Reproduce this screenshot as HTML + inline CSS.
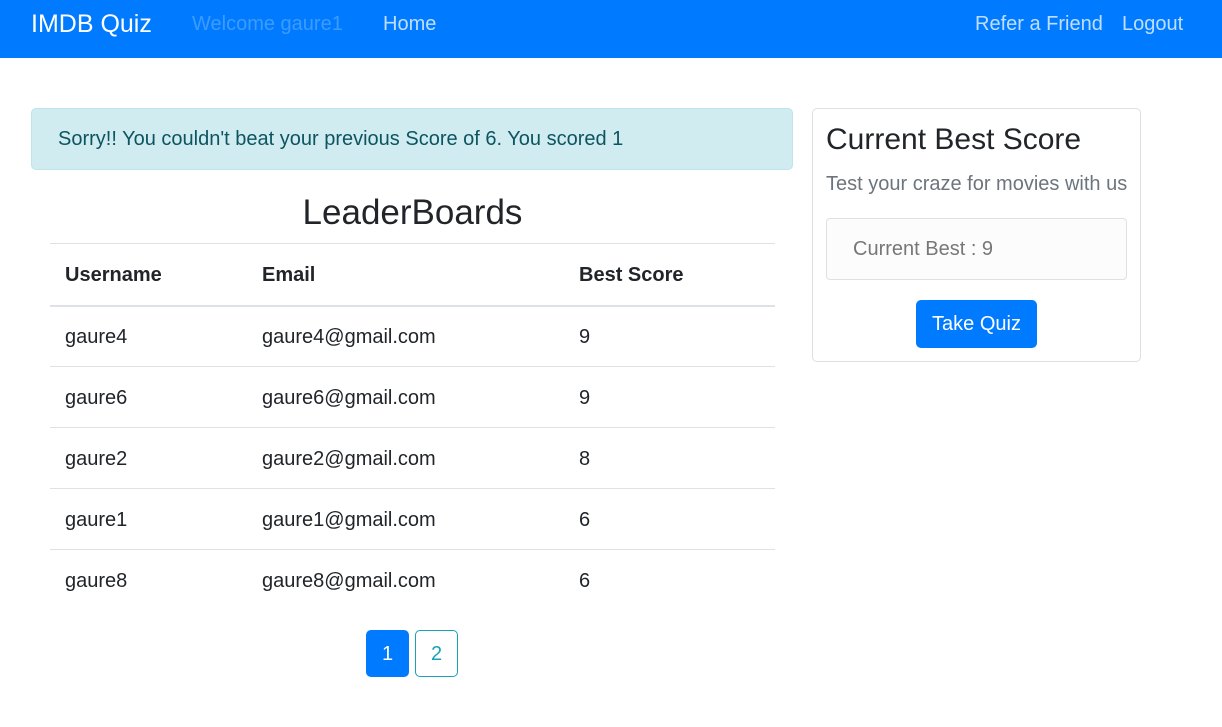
<!DOCTYPE html>
<html><head><style>
*{box-sizing:border-box;margin:0;padding:0}
body{width:1222px;height:727px;background:#fff;font-family:"Liberation Sans",sans-serif;color:#212529;position:relative;overflow:hidden}
.nav{position:absolute;left:0;top:0;width:1222px;height:58px;background:#007bff}
.nav span{position:absolute;top:1px;line-height:46px;font-size:20px;color:rgba(255,255,255,.75)}
.alert{position:absolute;left:31px;top:108px;width:762px;height:62px;background:#d1ecf1;border:1px solid #bee5eb;border-radius:5px;color:#0c5460;font-size:20px;padding-left:26px;line-height:61px}
h2{position:absolute;left:50px;width:725px;top:191px;text-align:center;font-weight:400;font-size:35px;line-height:44px}
table{position:absolute;left:50px;top:243px;width:725px;border-collapse:collapse;font-size:20px}
td,th{text-align:left;padding:2px 15px 0;height:61px;border-top:1px solid #dee2e6}
th{border-bottom:2px solid #dee2e6;height:62px}
.card{position:absolute;left:812px;top:108px;width:329px;height:254px;border:1px solid #dfdfdf;border-radius:5px}
.pg{position:absolute;top:630px;width:43px;height:47px;border-radius:5px;font-size:20px;text-align:center;line-height:45px}
</style></head><body>
<div class="nav">
<span style="left:31px;font-size:25px;color:#fff;line-height:46px">IMDB Quiz</span>
<span style="left:192px;color:#3d9bff">Welcome gaure1</span>
<span style="left:383px">Home</span>
<span style="left:975px">Refer a Friend</span>
<span style="left:1122px">Logout</span>
</div>
<div class="alert">Sorry!! You couldn't beat your previous Score of 6. You scored 1</div>
<h2>LeaderBoards</h2>
<table>
<tr><th style="width:197px">Username</th><th style="width:317px">Email</th><th>Best Score</th></tr>
<tr><td>gaure4</td><td>gaure4@gmail.com</td><td>9</td></tr>
<tr><td>gaure6</td><td>gaure6@gmail.com</td><td>9</td></tr>
<tr><td>gaure2</td><td>gaure2@gmail.com</td><td>8</td></tr>
<tr><td>gaure1</td><td>gaure1@gmail.com</td><td>6</td></tr>
<tr><td>gaure8</td><td>gaure8@gmail.com</td><td>6</td></tr>
</table>
<div class="pg" style="left:366px;background:#007bff;color:#fff;border:1px solid #007bff;line-height:46px">1</div>
<div class="pg" style="left:415px;border:1px solid #17a2b8;color:#17a2b8;line-height:46px">2</div>
<div class="card">
<div style="position:absolute;left:13px;top:12px;font-size:30px;line-height:38px">Current Best Score</div>
<div style="position:absolute;left:13px;top:62px;font-size:20px;color:#6c757d;line-height:26px">Test your craze for movies with us</div>
<div style="position:absolute;left:13px;top:109px;width:301px;height:62px;background:#fcfcfc;border:1px solid #e0e0e0;border-radius:4px;font-size:20px;color:#777;line-height:61px;padding-left:26px">Current Best : 9</div>
<div style="position:absolute;left:103px;top:191px;width:121px;height:48px;background:#007bff;color:#fff;border-radius:5px;font-size:20px;text-align:center;line-height:49px">Take Quiz</div>
</div>
</body></html>
